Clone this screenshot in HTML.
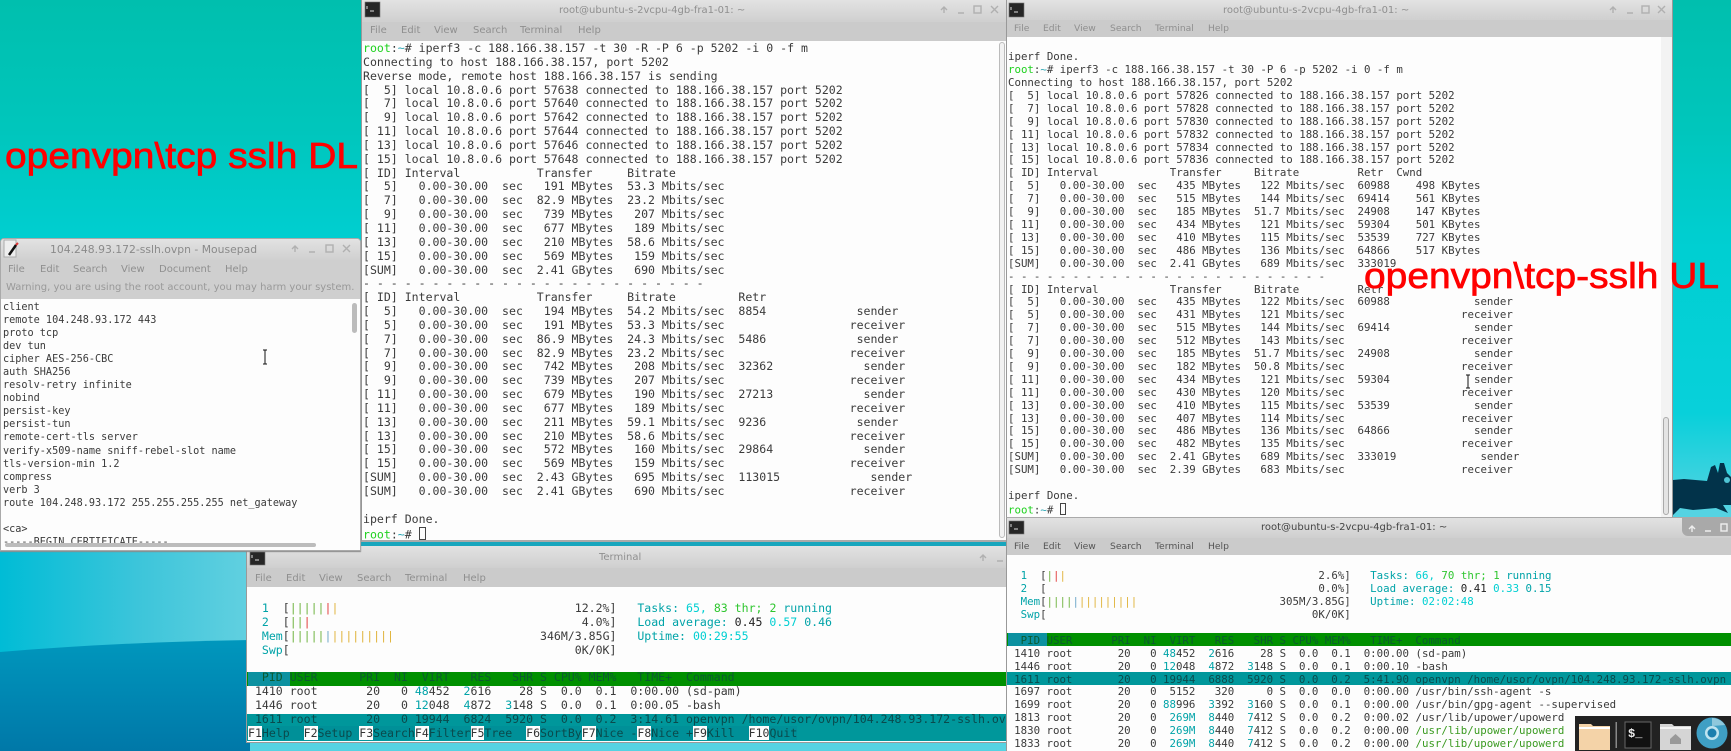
<!DOCTYPE html>
<html><head><meta charset="utf-8"><title>openvpn</title>
<style>
html,body{margin:0;padding:0;background:#00c8c0}
#p{position:relative;width:1731px;height:751px;overflow:hidden;filter:blur(.35px)}
.w{position:absolute;overflow:hidden;background:#fdfdfd;box-sizing:border-box}
.tb{position:absolute;left:0;right:0;top:0;background:linear-gradient(#e2e2e2,#cfcfcf)}
.mn{position:absolute;left:0;right:0;background:#cbcbcb}
.s{position:absolute;font:10px "DejaVu Sans",sans-serif;white-space:pre;color:#8f8f8f;line-height:14px}
.d{color:#555}
pre{position:absolute;margin:0;font-family:"DejaVu Sans Mono",monospace;color:#3a3a3a;white-space:pre;font-kerning:none}
.a{font-size:11.55px;line-height:13.85px}
.b{font-size:10.75px;line-height:12.93px}
.r{color:#1fd11f}.c{color:#2aa7b5}
.t{color:#00a3a8}.h{color:#00cfd2}.l{color:#2fc62f}.k{color:#222}
.g{color:#6fb33f}.x{color:#e23a3a}.y{color:#e0b33a}.u{color:#6aa5c8}
.f{color:#3a9a20}
.cur{display:inline-block;width:1ch;height:1.15em;border:1px solid #444;box-sizing:border-box;vertical-align:-2px}
.bar{position:absolute;left:0;right:0}
.fk b{font-weight:normal;background:#fdfdfd;color:#333}
.fk{color:#0a4a4c;background:#009098}
.hl{color:#0a4a4c}
</style></head><body><div id="p">

<svg style="position:absolute;left:0;top:0" width="1731" height="751" viewBox="0 0 1731 751">
<defs>
<linearGradient id="bg" x1="0" y1="0" x2="0" y2="1"><stop offset="0" stop-color="#00bfae"/><stop offset=".17" stop-color="#00c6bc"/><stop offset=".33" stop-color="#00cfd2"/><stop offset=".55" stop-color="#08d0da"/><stop offset=".68" stop-color="#55d3e2"/><stop offset="1" stop-color="#55d3e2"/></linearGradient>
<linearGradient id="lb" x1="0" y1="0" x2="1" y2="0"><stop offset="0" stop-color="#00bcd6"/><stop offset=".55" stop-color="#3cc5da"/><stop offset="1" stop-color="#62d0e0"/></linearGradient>
<linearGradient id="db" x1="0" y1="0" x2="0" y2="1"><stop offset="0" stop-color="#0097bd"/><stop offset="1" stop-color="#0078a8"/></linearGradient>
</defs>
<rect width="1731" height="751" fill="url(#bg)"/>
<rect x="0" y="552" width="250" height="110" fill="url(#lb)"/>
<path d="M0 652Q120 642 250 640L250 751L0 751Z" fill="url(#db)"/>
<rect x="361" y="540" width="646" height="7" fill="#18a6bd"/>
<path d="M1673 480L1684 479L1707 481L1711 467L1715 465L1718 473L1720 463L1724 463L1727 473L1731 477L1731 505L1723 505L1728 513L1716 508L1693 510L1680 508L1673 515Z" fill="#02334a"/>
<circle cx="1727" cy="480" r="3" fill="#4fc4d4"/>
<text x="5" y="168" font-family="Liberation Sans,sans-serif" font-size="36" fill="#ff0000" stroke="#ff0000" stroke-width=".7" textLength="353" lengthAdjust="spacingAndGlyphs">openvpn\tcp sslh DL</text>
</svg>

<!-- Window A -->
<div class="w" style="left:361px;top:0;width:646px;height:542px;border-left:1px solid #999;border-right:1px solid #999;border-bottom:2px solid #aaa">
<div class="tb" style="height:22px"></div><div class="mn" style="top:22px;height:19px"></div>
<div class="s" style="left:197px;top:4px;font-size:10px">root@ubuntu-s-2vcpu-4gb-fra1-01: ~</div>
<div class="s" style="left:8px;top:24px">File</div><div class="s" style="left:39px;top:24px">Edit</div><div class="s" style="left:72px;top:24px">View</div><div class="s" style="left:111px;top:24px">Search</div><div class="s" style="left:158px;top:24px">Terminal</div><div class="s" style="left:216px;top:24px">Help</div>
<pre class="a" style="left:1px;top:42px"><span class="r">root</span>:<span class="c">~</span># iperf3 -c 188.166.38.157 -t 30 -R -P 6 -p 5202 -i 0 -f m
Connecting to host 188.166.38.157, port 5202
Reverse mode, remote host 188.166.38.157 is sending
[  5] local 10.8.0.6 port 57638 connected to 188.166.38.157 port 5202
[  7] local 10.8.0.6 port 57640 connected to 188.166.38.157 port 5202
[  9] local 10.8.0.6 port 57642 connected to 188.166.38.157 port 5202
[ 11] local 10.8.0.6 port 57644 connected to 188.166.38.157 port 5202
[ 13] local 10.8.0.6 port 57646 connected to 188.166.38.157 port 5202
[ 15] local 10.8.0.6 port 57648 connected to 188.166.38.157 port 5202
[ ID] Interval           Transfer     Bitrate
[  5]   0.00-30.00  sec   191 MBytes  53.3 Mbits/sec
[  7]   0.00-30.00  sec  82.9 MBytes  23.2 Mbits/sec
[  9]   0.00-30.00  sec   739 MBytes   207 Mbits/sec
[ 11]   0.00-30.00  sec   677 MBytes   189 Mbits/sec
[ 13]   0.00-30.00  sec   210 MBytes  58.6 Mbits/sec
[ 15]   0.00-30.00  sec   569 MBytes   159 Mbits/sec
[SUM]   0.00-30.00  sec  2.41 GBytes   690 Mbits/sec
- - - - - - - - - - - - - - - - - - - - - - - - -
[ ID] Interval           Transfer     Bitrate         Retr
[  5]   0.00-30.00  sec   194 MBytes  54.2 Mbits/sec  8854             sender
[  5]   0.00-30.00  sec   191 MBytes  53.3 Mbits/sec                  receiver
[  7]   0.00-30.00  sec  86.9 MBytes  24.3 Mbits/sec  5486             sender
[  7]   0.00-30.00  sec  82.9 MBytes  23.2 Mbits/sec                  receiver
[  9]   0.00-30.00  sec   742 MBytes   208 Mbits/sec  32362             sender
[  9]   0.00-30.00  sec   739 MBytes   207 Mbits/sec                  receiver
[ 11]   0.00-30.00  sec   679 MBytes   190 Mbits/sec  27213             sender
[ 11]   0.00-30.00  sec   677 MBytes   189 Mbits/sec                  receiver
[ 13]   0.00-30.00  sec   211 MBytes  59.1 Mbits/sec  9236             sender
[ 13]   0.00-30.00  sec   210 MBytes  58.6 Mbits/sec                  receiver
[ 15]   0.00-30.00  sec   572 MBytes   160 Mbits/sec  29864             sender
[ 15]   0.00-30.00  sec   569 MBytes   159 Mbits/sec                  receiver
[SUM]   0.00-30.00  sec  2.43 GBytes   695 Mbits/sec  113015             sender
[SUM]   0.00-30.00  sec  2.41 GBytes   690 Mbits/sec                  receiver

iperf Done.
<span class="r">root</span>:<span class="c">~</span># <span class="cur"></span></pre>
<div style="position:absolute;left:637px;top:42px;width:6px;height:496px;border:1px solid #bbb;border-radius:3px;background:#f2f2f2;box-sizing:border-box"></div>
</div>

<!-- Window C -->
<div class="w" style="left:246px;top:546px;width:761px;height:197px;border-left:1px solid #999;border-bottom:1px solid #999">
<div class="tb" style="height:22px"></div><div class="mn" style="top:22px;height:19px"></div>
<div class="s" style="left:352px;top:5px;font-size:10px">Terminal</div>
<div class="s" style="left:8px;top:26px">File</div><div class="s" style="left:39px;top:26px">Edit</div><div class="s" style="left:72px;top:26px">View</div><div class="s" style="left:110px;top:26px">Search</div><div class="s" style="left:158px;top:26px">Terminal</div><div class="s" style="left:216px;top:26px">Help</div>
<div class="bar" style="top:126px;height:13.5px;background:#009000"></div>
<div class="bar" style="left:1px;right:auto;width:42px;top:126px;height:13.5px;background:#0c91a0"></div>
<div class="bar" style="top:167.5px;height:14px;background:#00979b"></div>
<div class="bar" style="top:181px;height:14px;background:#00979b"></div>
<pre class="a" style="left:1px;top:56px">  <span class="t">1</span>  [<span class="g">|||||</span><span class="x">|</span><span class="y">|</span>                                  12.2%]   <span class="t">Tasks:</span> <span class="h">65,</span> <span class="l">83</span> <span class="l">thr;</span> <span class="l">2</span> <span class="t">running</span>
  <span class="t">2</span>  [<span class="g">||</span><span class="x">|</span>                                       4.0%]   <span class="t">Load average:</span> <span class="k">0.45</span> <span class="h">0.57</span> <span class="t">0.46</span>
  <span class="t">Mem</span>[<span class="g">|||||</span><span class="u">|</span><span class="y">|||||||||</span>                     346M/3.85G]   <span class="t">Uptime:</span> <span class="h">00:29:55</span>
  <span class="t">Swp</span>[                                         0K/0K]

<span style="color:#0b5a30">  PID USER      PRI  NI  VIRT   RES   SHR S CPU% MEM%   TIME+  Command</span>
 1410 root       20   0 <span class="t">48</span>452  <span class="t">2</span>616    28 S  0.0  0.1  0:00.00 (sd-pam)
 1446 root       20   0 <span class="t">12</span>048  <span class="t">4</span>872  <span class="t">3</span>148 S  0.0  0.1  0:00.05 -bash
<span class="hl"> 1611 root       20   0 19944  6824  5920 S  0.0  0.2  3:14.61 openvpn /home/usor/ovpn/104.248.93.172-sslh.ov</span>
<span class="fk"><b>F1</b>Help  <b>F2</b>Setup <b>F3</b>Search<b>F4</b>Filter<b>F5</b>Tree  <b>F6</b>SortBy<b>F7</b>Nice -<b>F8</b>Nice +<b>F9</b>Kill  <b>F10</b>Quit</span></pre>
</div>

<!-- Mousepad -->
<div class="w" style="left:0;top:238px;width:361px;height:313px;border:1px solid #aaa;border-radius:4px 4px 0 0;box-shadow:0 1px 1px #888">
<div class="tb" style="height:22px"></div><div class="mn" style="top:22px;height:38px;background:#cfcfcf"></div>
<div class="s" style="left:49px;top:4px;font-size:10.8px;color:#8a8a8a">104.248.93.172-sslh.ovpn - Mousepad</div>
<div class="s" style="left:7px;top:24px">File</div><div class="s" style="left:39px;top:24px">Edit</div><div class="s" style="left:72px;top:24px">Search</div><div class="s" style="left:120px;top:24px">View</div><div class="s" style="left:158px;top:24px">Document</div><div class="s" style="left:224px;top:24px">Help</div>
<div class="s" style="left:5px;top:42px;font-size:10px;color:#999">Warning, you are using the root account, you may harm your system.</div>
<pre style="left:2px;top:61.5px;font-size:10.2px;line-height:13.1px">client
remote 104.248.93.172 443
proto tcp
dev tun
cipher AES-256-CBC
auth SHA256
resolv-retry infinite
nobind
persist-key
persist-tun
remote-cert-tls server
verify-x509-name sniff-rebel-slot name
tls-version-min 1.2
compress
verb 3
route 104.248.93.172 255.255.255.255 net_gateway

&lt;ca&gt;
-----BEGIN CERTIFICATE-----</pre>
<div style="position:absolute;left:351px;top:64px;width:5px;height:30px;background:#bcbcbc;border-radius:3px"></div>
<div style="position:absolute;left:4px;top:304px;width:311px;height:4px;background:#bcbcbc;border-radius:2px"></div>
</div>

<!-- Window D1 -->
<div class="w" style="left:1006px;top:0;width:667px;height:517px;border-left:1px solid #999;border-right:1px solid #999">
<div class="tb" style="height:20px"></div><div class="mn" style="top:20px;height:17px"></div>
<div class="s" style="left:216px;top:3.500px;font-size:10px">root@ubuntu-s-2vcpu-4gb-fra1-01: ~</div>
<div class="s" style="left:7px;top:22px;font-size:9.2px">File</div><div class="s" style="left:36px;top:22px;font-size:9.2px">Edit</div><div class="s" style="left:67px;top:22px;font-size:9.2px">View</div><div class="s" style="left:103px;top:22px;font-size:9.2px">Search</div><div class="s" style="left:148px;top:22px;font-size:9.2px">Terminal</div><div class="s" style="left:201px;top:22px;font-size:9.2px">Help</div>
<pre class="b" style="left:1px;top:51.2px;line-height:12.91px">iperf Done.
<span class="r">root</span>:<span class="c">~</span># iperf3 -c 188.166.38.157 -t 30 -P 6 -p 5202 -i 0 -f m
Connecting to host 188.166.38.157, port 5202
[  5] local 10.8.0.6 port 57826 connected to 188.166.38.157 port 5202
[  7] local 10.8.0.6 port 57828 connected to 188.166.38.157 port 5202
[  9] local 10.8.0.6 port 57830 connected to 188.166.38.157 port 5202
[ 11] local 10.8.0.6 port 57832 connected to 188.166.38.157 port 5202
[ 13] local 10.8.0.6 port 57834 connected to 188.166.38.157 port 5202
[ 15] local 10.8.0.6 port 57836 connected to 188.166.38.157 port 5202
[ ID] Interval           Transfer     Bitrate         Retr  Cwnd
[  5]   0.00-30.00  sec   435 MBytes   122 Mbits/sec  60988    498 KBytes
[  7]   0.00-30.00  sec   515 MBytes   144 Mbits/sec  69414    561 KBytes
[  9]   0.00-30.00  sec   185 MBytes  51.7 Mbits/sec  24908    147 KBytes
[ 11]   0.00-30.00  sec   434 MBytes   121 Mbits/sec  59304    501 KBytes
[ 13]   0.00-30.00  sec   410 MBytes   115 Mbits/sec  53539    727 KBytes
[ 15]   0.00-30.00  sec   486 MBytes   136 Mbits/sec  64866    517 KBytes
[SUM]   0.00-30.00  sec  2.41 GBytes   689 Mbits/sec  333019
- - - - - - - - - - - - - - - - - - - - - - - - -
[ ID] Interval           Transfer     Bitrate         Retr
[  5]   0.00-30.00  sec   435 MBytes   122 Mbits/sec  60988             sender
[  5]   0.00-30.00  sec   431 MBytes   121 Mbits/sec                  receiver
[  7]   0.00-30.00  sec   515 MBytes   144 Mbits/sec  69414             sender
[  7]   0.00-30.00  sec   512 MBytes   143 Mbits/sec                  receiver
[  9]   0.00-30.00  sec   185 MBytes  51.7 Mbits/sec  24908             sender
[  9]   0.00-30.00  sec   182 MBytes  50.8 Mbits/sec                  receiver
[ 11]   0.00-30.00  sec   434 MBytes   121 Mbits/sec  59304             sender
[ 11]   0.00-30.00  sec   430 MBytes   120 Mbits/sec                  receiver
[ 13]   0.00-30.00  sec   410 MBytes   115 Mbits/sec  53539             sender
[ 13]   0.00-30.00  sec   407 MBytes   114 Mbits/sec                  receiver
[ 15]   0.00-30.00  sec   486 MBytes   136 Mbits/sec  64866             sender
[ 15]   0.00-30.00  sec   482 MBytes   135 Mbits/sec                  receiver
[SUM]   0.00-30.00  sec  2.41 GBytes   689 Mbits/sec  333019             sender
[SUM]   0.00-30.00  sec  2.39 GBytes   683 Mbits/sec                  receiver

iperf Done.
<span class="r">root</span>:<span class="c">~</span># <span class="cur"></span></pre>
<div style="position:absolute;left:654px;top:37px;width:11px;height:480px;background:#f3f3f3"></div>
<div style="position:absolute;left:656px;top:417px;width:6px;height:98px;border:1px solid #aaa;border-radius:3px;background:#e4e4e4;box-sizing:border-box"></div>
</div>

<!-- Window D2 -->
<div class="w" style="left:1006px;top:517px;width:725px;height:234px;border-left:1px solid #999;border-top:1px solid #aaa">
<div class="tb" style="height:20px"></div><div class="mn" style="top:20px;height:17px"></div>
<div class="s d" style="left:254px;top:3px;font-size:10px;color:#444">root@ubuntu-s-2vcpu-4gb-fra1-01: ~</div>
<div class="s d" style="left:7px;top:21.500px;font-size:9.2px">File</div><div class="s d" style="left:36px;top:21.500px;font-size:9.2px">Edit</div><div class="s d" style="left:67px;top:21.500px;font-size:9.2px">View</div><div class="s d" style="left:103px;top:21.500px;font-size:9.2px">Search</div><div class="s d" style="left:148px;top:21.500px;font-size:9.2px">Terminal</div><div class="s d" style="left:201px;top:21.500px;font-size:9.2px">Help</div>
<div style="position:absolute;left:675px;top:0;width:50px;height:18px;background:#a9a9a9;border-radius:0 0 0 6px"></div>
<div class="bar" style="top:115px;height:13px;background:#009000"></div>
<div class="bar" style="left:1px;right:auto;width:39px;top:115px;height:13px;background:#0c91a0"></div>
<div class="bar" style="top:154px;height:13px;background:#00979b"></div>
<pre class="b" style="left:.7px;top:52px">  <span class="t">1</span>  [<span class="g">|</span><span class="x">|</span><span class="y">|</span>                                       2.6%]   <span class="t">Tasks:</span> <span class="h">66,</span> <span class="l">70</span> <span class="l">thr;</span> <span class="l">1</span> <span class="t">running</span>
  <span class="t">2</span>  [                                          0.0%]   <span class="t">Load average:</span> <span class="k">0.41</span> <span class="h">0.33</span> <span class="t">0.15</span>
  <span class="t">Mem</span>[<span class="g">||||</span><span class="u">|</span><span class="y">|||||||||</span>                      305M/3.85G]   <span class="t">Uptime:</span> <span class="h">02:02:48</span>
  <span class="t">Swp</span>[                                         0K/0K]

<span style="color:#0b5a30">  PID USER      PRI  NI  VIRT   RES   SHR S CPU% MEM%   TIME+  Command</span>
 1410 root       20   0 <span class="t">48</span>452  <span class="t">2</span>616    28 S  0.0  0.1  0:00.00 (sd-pam)
 1446 root       20   0 <span class="t">12</span>048  <span class="t">4</span>872  <span class="t">3</span>148 S  0.0  0.1  0:00.10 -bash
<span class="hl"> 1611 root       20   0 19944  6888  5920 S  0.0  0.2  5:41.90 openvpn /home/usor/ovpn/104.248.93.172-sslh.ovpn</span>
 1697 root       20   0  5152   320     0 S  0.0  0.0  0:00.00 /usr/bin/ssh-agent -s
 1699 root       20   0 <span class="t">88</span>996  <span class="t">3</span>392  <span class="t">3</span>160 S  0.0  0.1  0:00.00 /usr/bin/gpg-agent --supervised
 1813 root       20   0  <span class="t">269M</span>  <span class="t">8</span>440  <span class="t">7</span>412 S  0.0  0.2  0:00.02 /usr/lib/upower/upowerd
 1830 root       20   0  <span class="t">269M</span>  <span class="t">8</span>440  <span class="t">7</span>412 S  0.0  0.2  0:00.00 <span class="f">/usr/lib/upower/upowerd</span>
 1833 root       20   0  <span class="t">269M</span>  <span class="t">8</span>440  <span class="t">7</span>412 S  0.0  0.2  0:00.00 <span class="f">/usr/lib/upower/upowerd</span></pre>
</div>

<!-- Overlay: labels, icons, dock -->
<svg style="position:absolute;left:0;top:0" width="1731" height="751" viewBox="0 0 1731 751">
<text x="1364" y="288" font-family="Liberation Sans,sans-serif" font-size="36" fill="#ff0000" stroke="#ff0000" stroke-width=".7" textLength="355" lengthAdjust="spacingAndGlyphs">openvpn\tcp-sslh UL</text>

<!-- terminal icons -->
<g fill="#262626" stroke="#777" stroke-width=".6">
<rect x="365" y="2" width="15" height="15"/><rect x="1009" y="3" width="15" height="14"/><rect x="250" y="552" width="15" height="13"/><rect x="1009" y="521" width="15" height="13"/>
</g>
<g stroke="#ddd" stroke-width="1" fill="none">
<path d="M367 6v3M370 11h4"/><path d="M1011 7v3M1014 12h4"/><path d="M252 555v3M255 560h4"/><path d="M1011 524v3M1014 529h4"/>
</g>

<!-- mousepad icon -->
<rect x="4" y="240" width="12" height="17" fill="#eee" stroke="#aaa"/>
<path d="M9 255L16 245" stroke="#111" stroke-width="2.500"/><path d="M16 245L18 243" stroke="#d33" stroke-width="2"/>

<!-- window buttons -->
<g stroke="#b0b0b0" stroke-width="1.400" fill="none">
<path d="M944 13V7M941 10l3-3 3 3M958 13h6"/><rect x="974" y="6" width="7" height="7"/><path d="M991 6l7 7M998 6l-7 7"/>
<path d="M1613 13V7M1610 10l3-3 3 3M1627 13h6"/><rect x="1642" y="6" width="7" height="7"/><path d="M1658 6l7 7M1665 6l-7 7"/>
<path d="M295 252V246M292 249l3-3 3 3M309 252h6"/><rect x="326" y="245" width="7" height="7"/><path d="M343 245l7 7M350 245l-7 7"/>
<path d="M983 561V555M980 558l3-3 3 3M997 561h6"/>
</g>
<g stroke="#eee" stroke-width="1.400" fill="none">
<path d="M1692 532V526M1689 529l3-3 3 3M1705 531h6"/><rect x="1721" y="524" width="6" height="7"/>
</g>

<!-- I-beam cursors -->
<path d="M263 350h4M265 350v14M263 364h4M1466 375h4M1468 375v13M1466 388h4" stroke="#111" stroke-width="1" fill="none"/>

<!-- dock -->
<rect x="1575" y="716" width="156" height="35" fill="#222"/>
<path d="M1579 724h12l2 2h17v24h-31z" fill="#f4d3a8"/><rect x="1579" y="727" width="31" height="2" fill="#fff"/>
<rect x="1615.500" y="722" width="1.500" height="26" fill="#888"/>
<rect x="1625" y="722" width="26" height="26" fill="#111" stroke="#666"/>
<text x="1628" y="737" font-family="Liberation Mono,monospace" font-weight="bold" font-size="12" fill="#eee">$_</text>
<path d="M1660 724h12l2 2h17v24h-31z" fill="#d5d5d5"/><rect x="1660" y="727" width="31" height="2" fill="#f4f4f4"/>
<path d="M1670 739l5.500-5 5.500 5v5h-11z" fill="#999"/>
<circle cx="1712" cy="733" r="15.500" fill="#3f9fc4"/>
<path d="M1712 718a15.500 15.500 0 0 1 13 7l-13 1z" fill="#8fc8dc"/>
<circle cx="1712" cy="733" r="7" fill="#bfe4f0"/><circle cx="1712" cy="733" r="4.500" fill="#1c7fae"/>
</svg>
</div></body></html>
